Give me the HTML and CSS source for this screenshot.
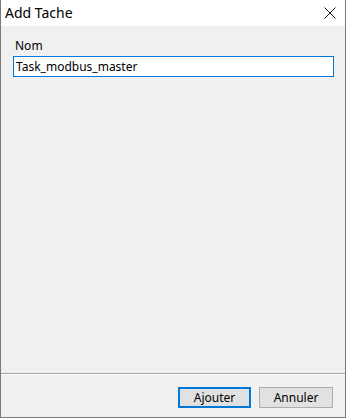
FILE: index.html
```html
<!DOCTYPE html>
<html lang="fr">
<head>
    <meta charset="UTF-8">
    <title>Add Tache</title>
    <link rel="stylesheet" href="styles.css">
</head>
<body>
    <div class="window">
        <header class="titlebar">
            <span class="title">Add Tache</span>
            <span class="close">
                <svg width="12" height="12" viewBox="0 0 12 12">
                    <path d="M0.5 0.5 L11.5 11.5 M11.5 0.5 L0.5 11.5" stroke="#1a1a1a" stroke-width="1" fill="none"/>
                </svg>
            </span>
        </header>
        <main class="content">
            <label class="field-label" for="nom">Nom</label>
            <input id="nom" class="field-input" type="text" value="Task_modbus_master">
        </main>
        <footer class="footer">
            <button class="btn btn-default">Ajouter</button>
            <button class="btn">Annuler</button>
        </footer>
    </div>
</body>
</html>
```

FILE: styles.css
```css
html{
    box-sizing: border-box;
    font-family: 'Noto Sans', 'Open Sans', sans-serif;
    font-size: 12px;
}

*,
*:after,
*:before{
    box-sizing: inherit;
}

body{
    margin: 0;
}

.window{
    width: 346px;
    height: 418px;
    display: flex;
    flex-direction: column;
    border: 1px solid #7a7a7a;
    border-top: none;
    background-color: #f0f0f0;
}

.titlebar{
    height: 26px;
    display: flex;
    align-items: center;
    justify-content: space-between;
    padding: 0 9px 0 4px;
    background-color: #fff;
    color: #000;
}

.title{
    font-size: 14px;
    margin-top: -2px;
}

.close{
    display: flex;
    margin-top: -1px;
}

.content{
    flex: 1;
    display: flex;
    flex-direction: column;
    padding: 12px 11px 0 12px;
}

.field-label{
    color: #000;
    line-height: 16px;
    padding-left: 2px;
    margin-bottom: 2px;
}

.field-input{
    width: 321px;
    height: 21px;
    margin: 0;
    padding: 0 2px;
    border: 1px solid #0078d7;
    outline: none;
    background: #fff;
    font: inherit;
    color: #000;
}

.footer{
    display: flex;
    justify-content: flex-end;
    gap: 8px;
    padding: 13px 12px 9px 0;
    border-top: 1px solid #a0a0a0;
    box-shadow: inset 0 1px 0 #fff;
}

.btn{
    width: 74px;
    height: 21px;
    margin: 0;
    padding: 0;
    border: 1px solid #adadad;
    background-color: #e1e1e1;
    font: inherit;
    color: #000;
}

.btn-default{
    width: 73px;
    border: 2px solid #0078d7;
}
```
